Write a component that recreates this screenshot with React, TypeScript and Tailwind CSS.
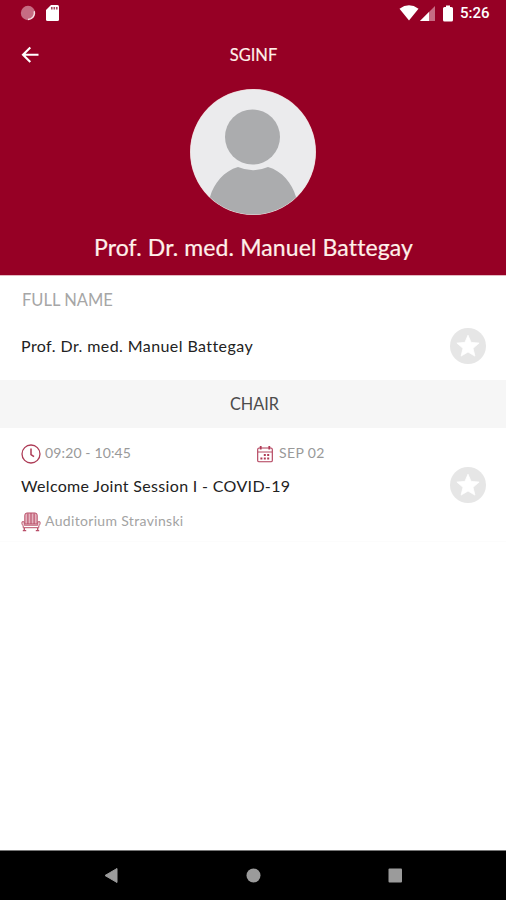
import React from "react";

function StarButton() {
  return (
    <button aria-label="Favourite" className="size-9 shrink-0">
      <svg viewBox="0 0 36 36" className="size-9">
        <circle cx="18" cy="18" r="18" fill="#e6e6e6" />
        <path
          d="M18 7.2l3.1 7.2 8 .7-6.1 5.2 1.9 7.8-6.9-4.1-6.9 4.1 1.9-7.8-6.1-5.2 8-.7z"
          fill="#fff"
          stroke="#fff"
          strokeWidth="0.8"
          strokeLinejoin="round"
        />
      </svg>
    </button>
  );
}

function ClockIcon() {
  return (
    <svg viewBox="0 0 20 20" className="size-5" fill="none" stroke="#ad3b56">
      <circle cx="10" cy="10" r="9" strokeWidth="1.3" />
      <path d="M10 4.500v6l3 2.200" strokeWidth="1.5" />
    </svg>
  );
}

function CalendarIcon() {
  return (
    <svg viewBox="0 0 16 18" className="h-[18px] w-4" fill="none" stroke="#b03a56">
      <rect x="0.7" y="3" width="14.6" height="13.8" rx="1.4" strokeWidth="1.1" />
      <path d="M1 7h14" strokeWidth="0.9" />
      <path d="M3.7 1v3.5M12.3 1v3.5" strokeWidth="1.8" />
      <path d="M6.8 9.9h2M10.2 9.9h2M3.4 13.4h2M6.8 13.4h2M10.2 13.4h2" strokeWidth="2" />
    </svg>
  );
}

function SeatIcon() {
  return (
    <svg viewBox="0 0 20 20" className="size-5" fill="none" stroke="#b94e68">
      <path d="M3.8 12V3.2Q3.8 1 6 1h8q2.2 0 2.2 2.2V12z" fill="#e5b3bf" strokeWidth="1" />
      <path d="M6.9 1.5V12M10 1v11M13.1 1.5V12" strokeWidth="1.1" />
      <path
        d="M1 9.8h2.200v3.400h13.600V9.800H19v2.700l-1.200 1v2.200H2.200v-2.200L1 12.500z"
        fill="#fff"
        strokeWidth="1"
      />
      <path d="M3.3 16v2.2M16.7 16v2.2M1.8 18.7h3.4M14.8 18.7h3.4" strokeWidth="1.3" />
    </svg>
  );
}

function StatusBar() {
  return (
    <div className="flex h-[27px] items-center">
      <svg viewBox="0 0 16 16" className="-mt-px ml-5 size-4">
        <circle cx="8" cy="8" r="7.2" fill="#c66c83" />
        <path d="M14.300 6.200A6.700 6.700 0 0 1 8 14.500" fill="none" stroke="#f8dfe5" strokeWidth="1.5" />
      </svg>
      <svg viewBox="0 0 14 16" className="-mt-px ml-[10px] h-4 w-[14px]">
        <path d="M5 0h6.500q1.500 0 1.500 1.500v13q0 1.500-1.500 1.500h-10Q0 16 0 14.500V5z" fill="#fff" />
        <path d="M5.800 2v2.500M8.300 2v2.500M10.800 2v2.500" stroke="#a64960" strokeWidth="1.6" />
      </svg>
      <svg viewBox="0 0 20 16" className="-mt-px ml-[339px] h-4 w-5">
        <path d="M0.5 3.700Q10-3 19.500 3.700L10 15.500z" fill="#fff" />
      </svg>
      <svg viewBox="0 0 15 15" className="ml-[1px] h-[15px] w-[15px]">
        <path d="M15 0v15H0z" fill="#c66c83" />
        <path d="M9 6v9H0z" fill="#fff" />
      </svg>
      <svg viewBox="0 0 10 17" className="-mt-px ml-2 h-[17px] w-[10px]">
        <path
          d="M3 0.5h4v1.600h1.500q1.500 0 1.500 1.500v11.400q0 1.500-1.500 1.500h-7Q0 16.500 0 15V3.600Q0 2.100 1.500 2.100H3z"
          fill="#fff"
        />
      </svg>
      <span className="ml-[7px] font-['Roboto',sans-serif] text-[15px] font-medium text-white">5:26</span>
    </div>
  );
}

function Header() {
  return (
    <header className="h-[275px] bg-[#960025] text-[#fff0ea]">
      <StatusBar />
      <div className="grid h-14 grid-cols-[1fr_auto_1fr] items-center">
        <svg viewBox="0 0 20 20" className="ml-5 size-5" fill="none" stroke="#fff" strokeWidth="2.1">
          <path d="M18.500 9.700H3.500M10.300 2.400L3 9.700l7.300 7.300" />
        </svg>
        <h1 className="pl-px text-[16.500px] leading-6 [-webkit-text-stroke:0.15px]">SGINF</h1>
      </div>
      <svg viewBox="0 0 126 126" className="mx-auto mt-[6px] size-[126px]">
        <defs>
          <clipPath id="avatar">
            <circle cx="63" cy="63" r="62.500" />
          </clipPath>
        </defs>
        <circle cx="63" cy="63" r="63" fill="#f1cdd0" />
        <g clipPath="url(#avatar)">
          <rect width="126" height="126" fill="#ebebed" />
          <circle cx="62.500" cy="48" r="27.500" fill="#abacae" />
          <path d="M20 108C24 94 34 82 48 78Q63 84.500 78 78C92 82 102 94 106 108V126H20z" fill="#abacae" />
        </g>
      </svg>
      <h2 className="mt-4 pl-px text-center text-[23px] leading-8 tracking-[0.120px] whitespace-nowrap [-webkit-text-stroke:0.2px]">
        Prof. Dr. med. Manuel Battegay
      </h2>
    </header>
  );
}

export default function App() {
  return (
    <div className="flex h-[900px] w-[506px] flex-col overflow-hidden bg-white font-['Lato',sans-serif] [font-variant-ligatures:none]">
      <Header />
      <main className="flex-1 border-t border-[#e4b9c2]">
        <section className="h-[104px] pt-[12px] pr-5 pl-[22px]">
          <div className="text-[16.500px] leading-6 text-[#a6a6a6]">FULL NAME</div>
          <div className="mt-4 flex items-center justify-between">
            <span className="-ml-px text-[16px] tracking-[0.420px] text-[#222]">Prof. Dr. med. Manuel Battegay</span>
            <StarButton />
          </div>
        </section>
        <div className="flex h-12 items-center justify-center bg-[#f6f6f6] pl-[3px] text-[16.300px] text-[#4c4c4c]">
          CHAIR
        </div>
        <section className="flex h-[113px] items-center justify-between pr-5 pl-[21px]">
          <div className="h-[91px]">
            <div className="flex h-[30px] items-center text-[14px] text-[#999]">
              <div className="flex w-[236px] items-center gap-1">
                <ClockIcon />
                <span className="-mt-[3px] tracking-[0.130px]">09:20 - 10:45</span>
              </div>
              <CalendarIcon />
              <span className="-mt-[3px] ml-[6px] tracking-[0.350px]">SEP 02</span>
            </div>
            <div className="flex h-[37px] items-center pb-[3px] text-[16px] tracking-[0.330px] text-[#222]">
              Welcome Joint Session I - COVID-19
            </div>
            <div className="flex h-[31px] items-center gap-[4px] text-[14px] text-[#a3a3a3]">
              <SeatIcon />
              <span className="-mt-[2px] tracking-[0.330px]">Auditorium Stravinski</span>
            </div>
          </div>
          <StarButton />
        </section>
        <div className="h-px bg-[#fcfcfc]" />
      </main>
      <nav className="h-[50px] border-t border-[#777] bg-black">
        <svg viewBox="0 0 506 49" className="h-[49px] w-[506px]" fill="#9b9b9b">
          <path d="M105 24.500L117 17.500v14z" stroke="#9b9b9b" strokeLinejoin="round" />
          <circle cx="253.500" cy="24.500" r="7" />
          <rect x="388.500" y="17.500" width="13.500" height="14" rx="1" />
        </svg>
      </nav>
    </div>
  );
}
